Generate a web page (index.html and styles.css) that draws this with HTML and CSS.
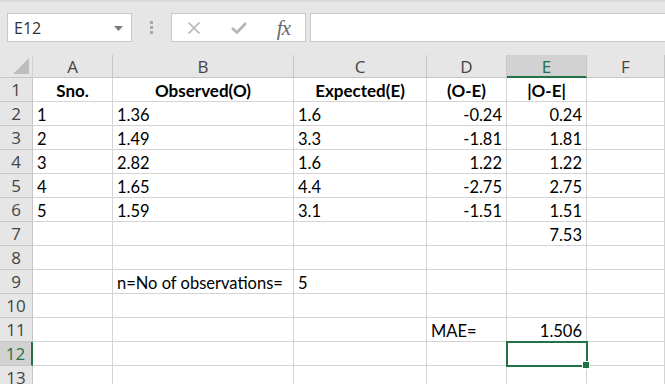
FILE: index.html
```html
<!DOCTYPE html>
<html lang="en"><head>
<meta charset="utf-8">
<title>MAE sheet</title>
<link rel="stylesheet" href="styles.css">
</head>
<body>
<div class="toolbar">
  <div class="namebox"><span>E12</span>
    <svg class="drop" width="9" height="5" viewBox="0 0 9 5"><path d="M0 0H9L4.5 5Z" fill="#7a7a7a"/></svg>
  </div>
  <div class="grip"><i></i><i></i><i></i></div>
  <div class="fxbox">
    <svg width="14" height="14" viewBox="0 0 14 14"><path d="M1.5 1.5L12.5 12.5M12.5 1.5L1.5 12.5" stroke="#b4b4b4" stroke-width="1.6" fill="none"/></svg>
    <svg width="18" height="14" viewBox="0 0 18 14"><path d="M2 7L7 11.5L16 2" stroke="#b4b4b4" stroke-width="2.6" fill="none"/></svg>
    <span class="fx">fx</span>
  </div>
  <div class="formula"></div>
</div>

<div class="sheet">
  <div class="corner"><b></b></div>
  <div class="ch">A</div><div class="ch">B</div><div class="ch">C</div><div class="ch">D</div><div class="ch sel">E</div><div class="ch">F</div>

  <div class="rh">1</div><div class="c h">Sno.</div><div class="c h">Observed(O)</div><div class="c h">Expected(E)</div><div class="c h">(O-E)</div><div class="c h">|O-E|</div><div class="c"></div>
  <div class="rh">2</div><div class="c">1</div><div class="c">1.36</div><div class="c">1.6</div><div class="c n">-0.24</div><div class="c n">0.24</div><div class="c"></div>
  <div class="rh">3</div><div class="c">2</div><div class="c">1.49</div><div class="c">3.3</div><div class="c n">-1.81</div><div class="c n">1.81</div><div class="c"></div>
  <div class="rh">4</div><div class="c">3</div><div class="c">2.82</div><div class="c">1.6</div><div class="c n">1.22</div><div class="c n">1.22</div><div class="c"></div>
  <div class="rh">5</div><div class="c">4</div><div class="c">1.65</div><div class="c">4.4</div><div class="c n">-2.75</div><div class="c n">2.75</div><div class="c"></div>
  <div class="rh">6</div><div class="c">5</div><div class="c">1.59</div><div class="c">3.1</div><div class="c n">-1.51</div><div class="c n">1.51</div><div class="c"></div>
  <div class="rh">7</div><div class="c"></div><div class="c"></div><div class="c"></div><div class="c"></div><div class="c n">7.53</div><div class="c"></div>
  <div class="rh">8</div><div class="c"></div><div class="c"></div><div class="c"></div><div class="c"></div><div class="c"></div><div class="c"></div>
  <div class="rh">9</div><div class="c"></div><div class="c">n=No of observations=</div><div class="c">5</div><div class="c"></div><div class="c"></div><div class="c"></div>
  <div class="rh">10</div><div class="c"></div><div class="c"></div><div class="c"></div><div class="c"></div><div class="c"></div><div class="c"></div>
  <div class="rh">11</div><div class="c"></div><div class="c"></div><div class="c"></div><div class="c">MAE=</div><div class="c n">1.506</div><div class="c"></div>
  <div class="rh sel">12</div><div class="c"></div><div class="c"></div><div class="c"></div><div class="c"></div><div class="c active"></div><div class="c"></div>
  <div class="rh">13</div><div class="c"></div><div class="c"></div><div class="c"></div><div class="c"></div><div class="c"></div><div class="c"></div>
</div>
</body></html>
```

FILE: styles.css
```css
html, body{ margin:0; padding:0; background:#fff; overflow:hidden; }
body{ width:665px; height:384px; font-family:"Lato", "Noto Sans", sans-serif; color:#000; }

.toolbar{ height:55px; box-sizing:border-box; background:#e6e6e6; border-top:2px solid #dadada; display:flex; align-items:flex-start; padding-top:11px; }
.namebox{ margin-left:7px; width:125px; height:29px; box-sizing:border-box; background:#fff; border:1px solid #c8c8c8; display:flex; align-items:center; justify-content:space-between; padding:0 8px 0 6px; font-family:"Open Sans", sans-serif; font-size:16px; color:#333; }
.drop{ margin-top:1px; }
.grip{ width:39px; height:29px; display:flex; flex-direction:column; align-items:center; justify-content:center; gap:2px; }
.grip i{ display:block; width:3px; height:3px; background:#a8a8a8; }
.fxbox{ width:135px; height:29px; box-sizing:border-box; background:#fff; border:1px solid #c8c8c8; display:flex; align-items:center; justify-content:space-between; padding:0 15px 0 15px; }
.fx{ font-family:"Liberation Serif", serif; font-style:italic; font-size:21px; line-height:22px; color:#6a6a6a; letter-spacing:-1px; }
.formula{ margin-left:4px; flex:1; height:29px; box-sizing:border-box; background:#fff; border:1px solid #c8c8c8; border-right:none; }

.sheet{ display:grid; grid-template-columns:33px 80px 181px 133px 80px 80px 1fr; grid-template-rows:23px; grid-auto-rows:24px; }
.sheet > div{ box-sizing:border-box; border-right:1px solid #d4d4d4; border-bottom:1px solid #d4d4d4; }

.corner{ background:#e6e6e6; position:relative; border-bottom-color:#c6c6c6 !important; }
.corner b{ position:absolute; right:3px; bottom:3px; width:0; height:0; border-left:16px solid transparent; border-bottom:16px solid #bdbdbd; }
.ch{ background:#e6e6e6; border-right-color:#c6c6c6 !important; border-bottom-color:#c6c6c6 !important; font-family:"Open Sans", sans-serif; font-size:17px; color:#444; text-align:center; line-height:23px; }
.ch.sel{ background:#d2d2d2; color:#217346; border-bottom:2px solid #217346 !important; }
.rh{ background:#e6e6e6; border-right-color:#c6c6c6 !important; border-bottom-color:#c6c6c6 !important; font-family:"Open Sans", sans-serif; font-size:17px; color:#444; text-align:center; line-height:24px; }
.rh.sel{ background:#d2d2d2; color:#217346; border-right:2px solid #217346 !important; }

.c{ font-size:16.5px; line-height:22px; padding:2px 4px 0; white-space:nowrap; }
.c.n{ text-align:right; }
.c.h{ font-weight:bold; font-size:17px; text-align:center; }
.c.active{ position:relative; outline:2px solid #217346; outline-offset:-1px; }
.c.active::after{ content:""; position:absolute; right:-4px; bottom:-4px; width:6px; height:6px; background:#217346; border:1px solid #fff; }
```
